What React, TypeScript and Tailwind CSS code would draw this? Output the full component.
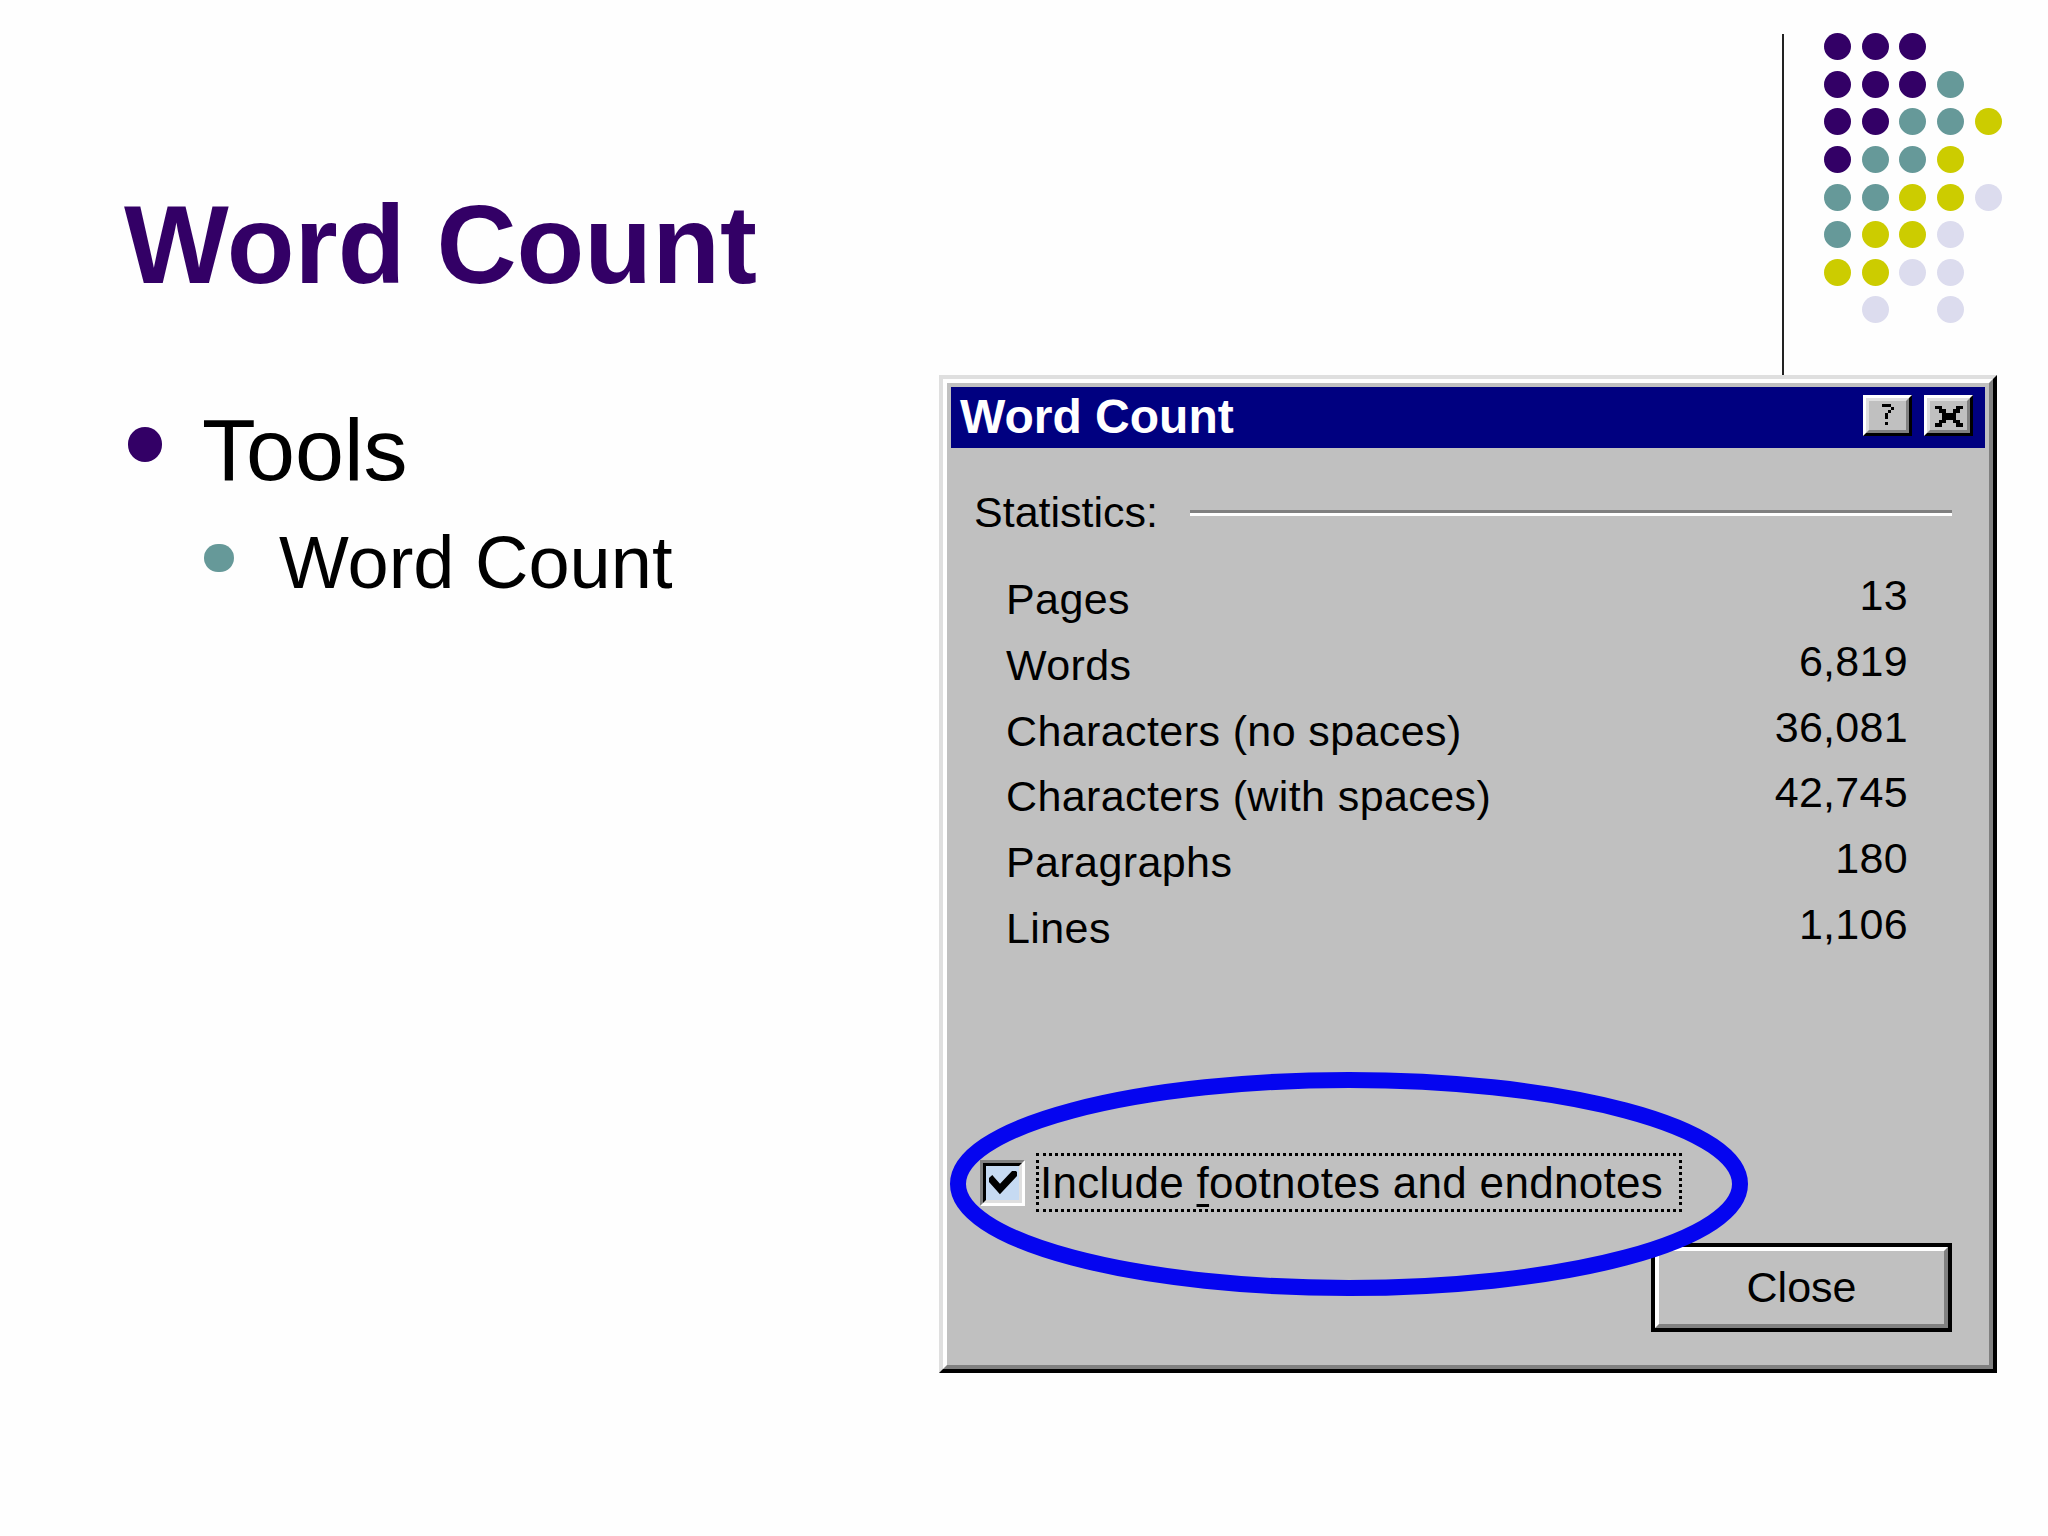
import React from "react";

const P = "bg-[#330066]";
const T = "bg-[#669999]";
const Y = "bg-[#cccc00]";
const L = "bg-[#dcdcee]";

const dots: (string | null)[][] = [
  [P, P, P, null, null],
  [P, P, P, T, null],
  [P, P, T, T, Y],
  [P, T, T, Y, null],
  [T, T, Y, Y, L],
  [T, Y, Y, L, null],
  [Y, Y, L, L, null],
  [null, L, null, L, null],
];

const stats: [string, string][] = [
  ["Pages", "13"],
  ["Words", "6,819"],
  ["Characters (no spaces)", "36,081"],
  ["Characters (with spaces)", "42,745"],
  ["Paragraphs", "180"],
  ["Lines", "1,106"],
];

function CaptionButton({ children }: { children: React.ReactNode }) {
  return (
    <div className="w-[49px] h-[41px] border-[3px] border-t-white border-l-white border-r-black border-b-black">
      <div className="w-full h-full border-[3px] border-t-[#dfdfdf] border-l-[#dfdfdf] border-r-[#808080] border-b-[#808080] bg-[#c0c0c0] flex items-center justify-center">
        {children}
      </div>
    </div>
  );
}

export default function App() {
  return (
    <div
      className="w-[2048px] h-[1536px] bg-[#fefefe] flex overflow-hidden"
      style={{ fontFamily: '"Liberation Sans", Arial, sans-serif' }}
    >
      {/* Left column: slide text */}
      <div className="w-[939px] shrink-0 pl-[124px] pt-[190px]">
        <h1 className="text-[111px] leading-none font-bold text-[#330066]">Word Count</h1>
        <div className="mt-[105px] flex items-start">
          <div className="ml-[4px] mt-[21px] w-[34px] h-[35px] rounded-full bg-[#330066] shrink-0" />
          <div className="ml-[40px] text-[88px] leading-none text-black">Tools</div>
        </div>
        <div className="mt-[32px] ml-[80px] flex items-start">
          <div className="mt-[18px] w-[30px] h-[28px] rounded-full bg-[#669999] shrink-0" />
          <div className="ml-[45px] text-[74px] leading-none text-black">Word Count</div>
        </div>
      </div>

      {/* Right column */}
      <div className="flex flex-col">
        <div className="h-[375px] flex pl-[843px]">
          <div className="w-[2px] mt-[34px] h-[341px] bg-[#222222]" />
          <div className="ml-[35px] mt-[28px] grid grid-cols-[repeat(5,37.6px)] auto-rows-[37.6px]">
            {dots.flatMap((row, r) =>
              row.map((c, i) => (
                <div key={`${r}-${i}`} className="flex items-center justify-center">
                  {c ? <div className={`w-[27px] h-[27px] rounded-full ${c}`} /> : null}
                </div>
              ))
            )}
          </div>
        </div>

        {/* Dialog */}
        <div className="relative w-[1058px] h-[998px] border-4 border-t-[#dfdfdf] border-l-[#dfdfdf] border-r-black border-b-black">
          <div className="h-full border-4 border-t-white border-l-white border-r-[#808080] border-b-[#808080] bg-[#c0c0c0] p-[4px] flex flex-col text-black">
            {/* Title bar */}
            <div className="h-[61px] bg-[#000080] flex items-start pl-[9px] pr-[12px] shrink-0">
              <div className="mt-[6px] text-white font-bold text-[48px] leading-none">Word Count</div>
              <div className="ml-auto mt-[8px] flex gap-[12px]">
                <CaptionButton>
                  <svg width="18" height="28" viewBox="0 0 6 8" shapeRendering="crispEdges">
                    <rect x="1" y="0" width="3" height="1" fill="#000" />
                    <rect x="4" y="1" width="1" height="1" fill="#000" />
                    <rect x="3" y="2" width="1" height="1" fill="#000" />
                    <rect x="2" y="3" width="1" height="2" fill="#000" />
                    <rect x="2" y="6" width="1" height="1" fill="#000" />
                  </svg>
                </CaptionButton>
                <CaptionButton>
                  <svg width="28" height="22" viewBox="0 0 8 6" shapeRendering="crispEdges">
                    <rect x="0" y="0" width="2" height="1" fill="#000" />
                    <rect x="6" y="0" width="2" height="1" fill="#000" />
                    <rect x="1" y="1" width="2" height="1" fill="#000" />
                    <rect x="5" y="1" width="2" height="1" fill="#000" />
                    <rect x="2" y="2" width="4" height="2" fill="#000" />
                    <rect x="1" y="4" width="2" height="1" fill="#000" />
                    <rect x="5" y="4" width="2" height="1" fill="#000" />
                    <rect x="0" y="5" width="2" height="1" fill="#000" />
                    <rect x="6" y="5" width="2" height="1" fill="#000" />
                  </svg>
                </CaptionButton>
              </div>
            </div>

            {/* Statistics header */}
            <div className="mt-[43px] h-[43px] flex items-center shrink-0">
              <div className="ml-[23px] text-[43px] leading-none">Statistics:</div>
              <div className="flex-1 ml-[32px] mr-[33px] h-[6px] border-t-[3px] border-t-[#808080] border-b-[3px] border-b-white" />
            </div>

            {/* Rows */}
            <div className="mt-[33px] flex shrink-0">
              <div className="ml-[55px] flex flex-col">
                {stats.map(([label]) => (
                  <div key={label} className="h-[65.8px] leading-[65.8px] text-[43px] tracking-[0.4px] whitespace-nowrap">
                    {label}
                  </div>
                ))}
              </div>
              <div className="ml-auto mr-[77px] -mt-[4px] flex flex-col items-end">
                {stats.map(([label, value]) => (
                  <div key={label} className="h-[65.8px] leading-[65.8px] text-[43px] tracking-[0.3px]">
                    {value}
                  </div>
                ))}
              </div>
            </div>

            <div className="flex-1" />

            {/* Checkbox row */}
            <div className="h-[59px] flex items-center shrink-0">
              <div className="ml-[29px] w-[45px] h-[46px] border-[3px] border-t-[#808080] border-l-[#808080] border-r-white border-b-white">
                <div className="w-full h-full border-[3px] border-t-black border-l-black border-r-[#dfdfdf] border-b-[#dfdfdf] bg-[#c6daf2] flex items-center justify-center">
                  <svg width="28" height="24" viewBox="0 0 28 24">
                    <path d="M3 9 L11 18 L25 3" fill="none" stroke="#000" strokeWidth="7" strokeLinecap="square" />
                  </svg>
                </div>
              </div>
              <div className="ml-[11px] w-[646px] h-[59px] border-[3px] border-dotted border-black flex items-center pl-[1px]">
                <span className="text-[44px] leading-none whitespace-nowrap tracking-[0.3px]">
                  Include <span className="underline decoration-[3px] underline-offset-[6px]">f</span>ootnotes and endnotes
                </span>
              </div>
            </div>

            {/* Close button row */}
            <div className="mt-[31px] mb-[29px] mr-[33px] flex justify-end shrink-0">
              <div className="w-[301px] h-[89px] border-4 border-black">
                <div className="w-full h-full border-4 border-t-white border-l-white border-r-[#808080] border-b-[#808080] bg-[#c0c0c0] flex items-center justify-center">
                  <span className="text-[43px] leading-none">Close</span>
                </div>
              </div>
            </div>
          </div>

          {/* Blue highlight ellipse */}
          <svg
            className="absolute left-[6px] top-[692px] pointer-events-none"
            width="800"
            height="226"
            viewBox="0 0 800 226"
          >
            <ellipse cx="400" cy="113" rx="391" ry="104" fill="none" stroke="#0505f0" strokeWidth="16" />
          </svg>
        </div>
      </div>
    </div>
  );
}
